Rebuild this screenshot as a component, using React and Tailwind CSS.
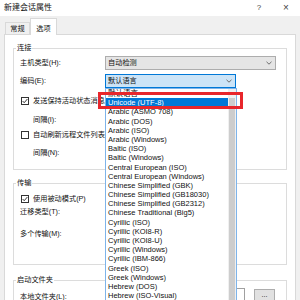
import React from "react";

const Chevron = ({ color = "#606060" }) => (
  <svg width="6" height="4" viewBox="0 0 6 4" className="shrink-0">
    <polyline points="0.5,0.8 3,3.2 5.5,0.8" fill="none" stroke={color} strokeWidth="0.9" />
  </svg>
);

const Checkbox = ({ checked }) => (
  <div className="w-[8px] h-[8px] border border-[#333] bg-white shrink-0 flex items-center justify-center">
    {checked && (
      <svg width="6" height="6" viewBox="0 0 6 6">
        <polyline points="0.6,3 2.2,4.7 5.4,1" fill="none" stroke="#222" strokeWidth="0.9" />
      </svg>
    )}
  </div>
);

const items = [
  "默认语言",
  "Unicode (UTF-8)",
  "Arabic (ASMO 708)",
  "Arabic (DOS)",
  "Arabic (ISO)",
  "Arabic (Windows)",
  "Baltic (ISO)",
  "Baltic (Windows)",
  "Central European (ISO)",
  "Central European (Windows)",
  "Chinese Simplified (GBK)",
  "Chinese Simplified (GB18030)",
  "Chinese Simplified (GB2312)",
  "Chinese Traditional (Big5)",
  "Cyrillic (ISO)",
  "Cyrillic (KOI8-R)",
  "Cyrillic (KOI8-U)",
  "Cyrillic (Windows)",
  "Cyrillic (IBM-866)",
  "Greek (ISO)",
  "Greek (Windows)",
  "Hebrew (DOS)",
  "Hebrew (ISO-Visual)",
];

export default function App() {
  return (
    <div className="w-[300px] h-[300px] overflow-hidden relative bg-[#f0f0f0] text-[#111] text-[7.2px] font-['Liberation_Sans','Noto_Sans_CJK_SC',sans-serif] flex flex-col">
      {/* title bar */}
      <div className="h-[16px] bg-white flex items-center justify-between pl-[4px] pr-[8px] shrink-0">
        <span className="text-[8px] leading-[10px]">新建会话属性</span>
        <div className="flex items-center gap-[15px] text-[#444]">
          <span className="w-[12px] text-center text-[8px] leading-[10px]">?</span>
          <span className="w-[12px] text-center text-[10px] leading-[10px] font-light">×</span>
        </div>
      </div>
      {/* tabs */}
      <div className="h-[18px] flex items-end pl-[5px] shrink-0">
        <div className="w-[25px] h-[12px] border border-b-0 border-[#d9d9d9] flex items-start justify-center pt-[1px] leading-[10px]">
          常规
        </div>
        <div className="w-[27px] h-[17px] bg-white border border-b-0 border-[#d9d9d9] relative z-10 mb-[-1px] flex items-start justify-center pt-[5px] leading-[10px]">
          选项
        </div>
      </div>
      {/* panel */}
      <div className="mx-[4px] flex-1 bg-white border border-[#d9d9d9] pt-[8px] px-[8px]">
        <fieldset className="border border-[#dcdcdc]">
          <legend className="ml-[2px] px-[1px] leading-[10px]">连接</legend>
          <div className="flex flex-col pl-[6px]">
            <div className="mt-[3px] h-[14px] flex items-center">
              <span className="w-[85px] shrink-0">主机类型(H):</span>
              <div className="w-[171px] h-[14px] bg-[#e5e5e5] border border-[#adadad] flex items-center justify-between pl-[2px] pr-[3px]">
                <span>自动检测</span>
                <Chevron />
              </div>
            </div>
            <div className="mt-[4px] h-[14px] flex items-center">
              <span className="w-[85px] shrink-0">编码(E):</span>
              <div className="w-[131px] h-[14px] bg-[#cce4f7] border border-[#0078d7] flex items-center justify-between pl-[2px] pr-[3px]">
                <span>默认语言</span>
                <Chevron />
              </div>
            </div>
            <div className="mt-[6px] h-[14px] flex items-center gap-[4px] pl-[1px] whitespace-nowrap">
              <Checkbox checked />
              <span>发送保持活动状态消息(S)</span>
            </div>
            <div className="mt-[5px] h-[14px] flex items-center pl-[13px]">
              <span>间隔(I):</span>
            </div>
            <div className="mt-[1px] h-[14px] flex items-center gap-[4px] pl-[1px] whitespace-nowrap">
              <Checkbox />
              <span>自动刷新远程文件列表(A)</span>
            </div>
            <div className="mt-[4px] h-[14px] flex items-center pl-[13px]">
              <span>间隔(N):</span>
            </div>
            <div className="h-[9px]" />
          </div>
        </fieldset>

        <fieldset className="border border-[#dcdcdc] mt-[8px]">
          <legend className="ml-[2px] px-[1px] leading-[10px]">传输</legend>
          <div className="flex flex-col pl-[6px]">
            <div className="mt-[5px] h-[12px] flex items-center gap-[4px] pl-[1px]">
              <Checkbox checked />
              <span>使用被动模式(P)</span>
            </div>
            <div className="mt-[1px] h-[12px] flex items-center">
              <span>迁移类型(T):</span>
            </div>
            <div className="mt-[10px] h-[12px] flex items-center">
              <span>多个传输(M):</span>
            </div>
            <div className="h-[24px]" />
          </div>
        </fieldset>

        <fieldset className="border border-[#dcdcdc] mt-[10px]">
          <legend className="ml-[2px] px-[1px] leading-[10px]">启动文件夹</legend>
          <div className="flex flex-col pl-[6px]">
            <div className="mt-[3px] h-[18px] flex items-start">
              <span className="w-[85px] shrink-0 leading-[18px]">本地文件夹(L):</span>
              <div className="w-[140px] h-[18px] bg-white border border-[#a0a0a0]" />
              <div className="ml-[9px] mt-[1px] w-[21px] h-[22px] bg-[#e1e1e1] border border-[#adadad] flex items-start justify-center pt-[2px] leading-[6px]">
                ...
              </div>
            </div>
          </div>
        </fieldset>
      </div>

      {/* dropdown list overlay */}
      <div className="absolute left-[105px] top-[88px] w-[132px] h-[220px] bg-white border border-[#7eb4ea] z-20 flex text-[7.5px]">
        <div className="flex-1 flex flex-col">
          {items.map((t, i) => (
            <div
              key={t}
              className={
                i === 1
                  ? "h-[9.2px] leading-[9.2px] pl-[2px] whitespace-nowrap bg-[#0078d7] text-white"
                  : "h-[9.2px] leading-[9.2px] pl-[2px] whitespace-nowrap"
              }
            >
              {t}
            </div>
          ))}
        </div>
        <div className="w-[8px] bg-[#f0f0f0] flex flex-col items-center">
          <div className="h-[9px] flex items-center justify-center">
            <svg width="5" height="3" viewBox="0 0 5 3">
              <polygon points="0,3 2.5,0 5,3" fill="#606060" />
            </svg>
          </div>
          <div className="flex-1 w-[6px] bg-[#cdcdcd]" />
        </div>
      </div>

      {/* red highlight annotation */}
      <div className="absolute left-[98px] top-[92px] w-[145px] h-[17px] border-[3px] border-[#e8262b] z-30" />
    </div>
  );
}
